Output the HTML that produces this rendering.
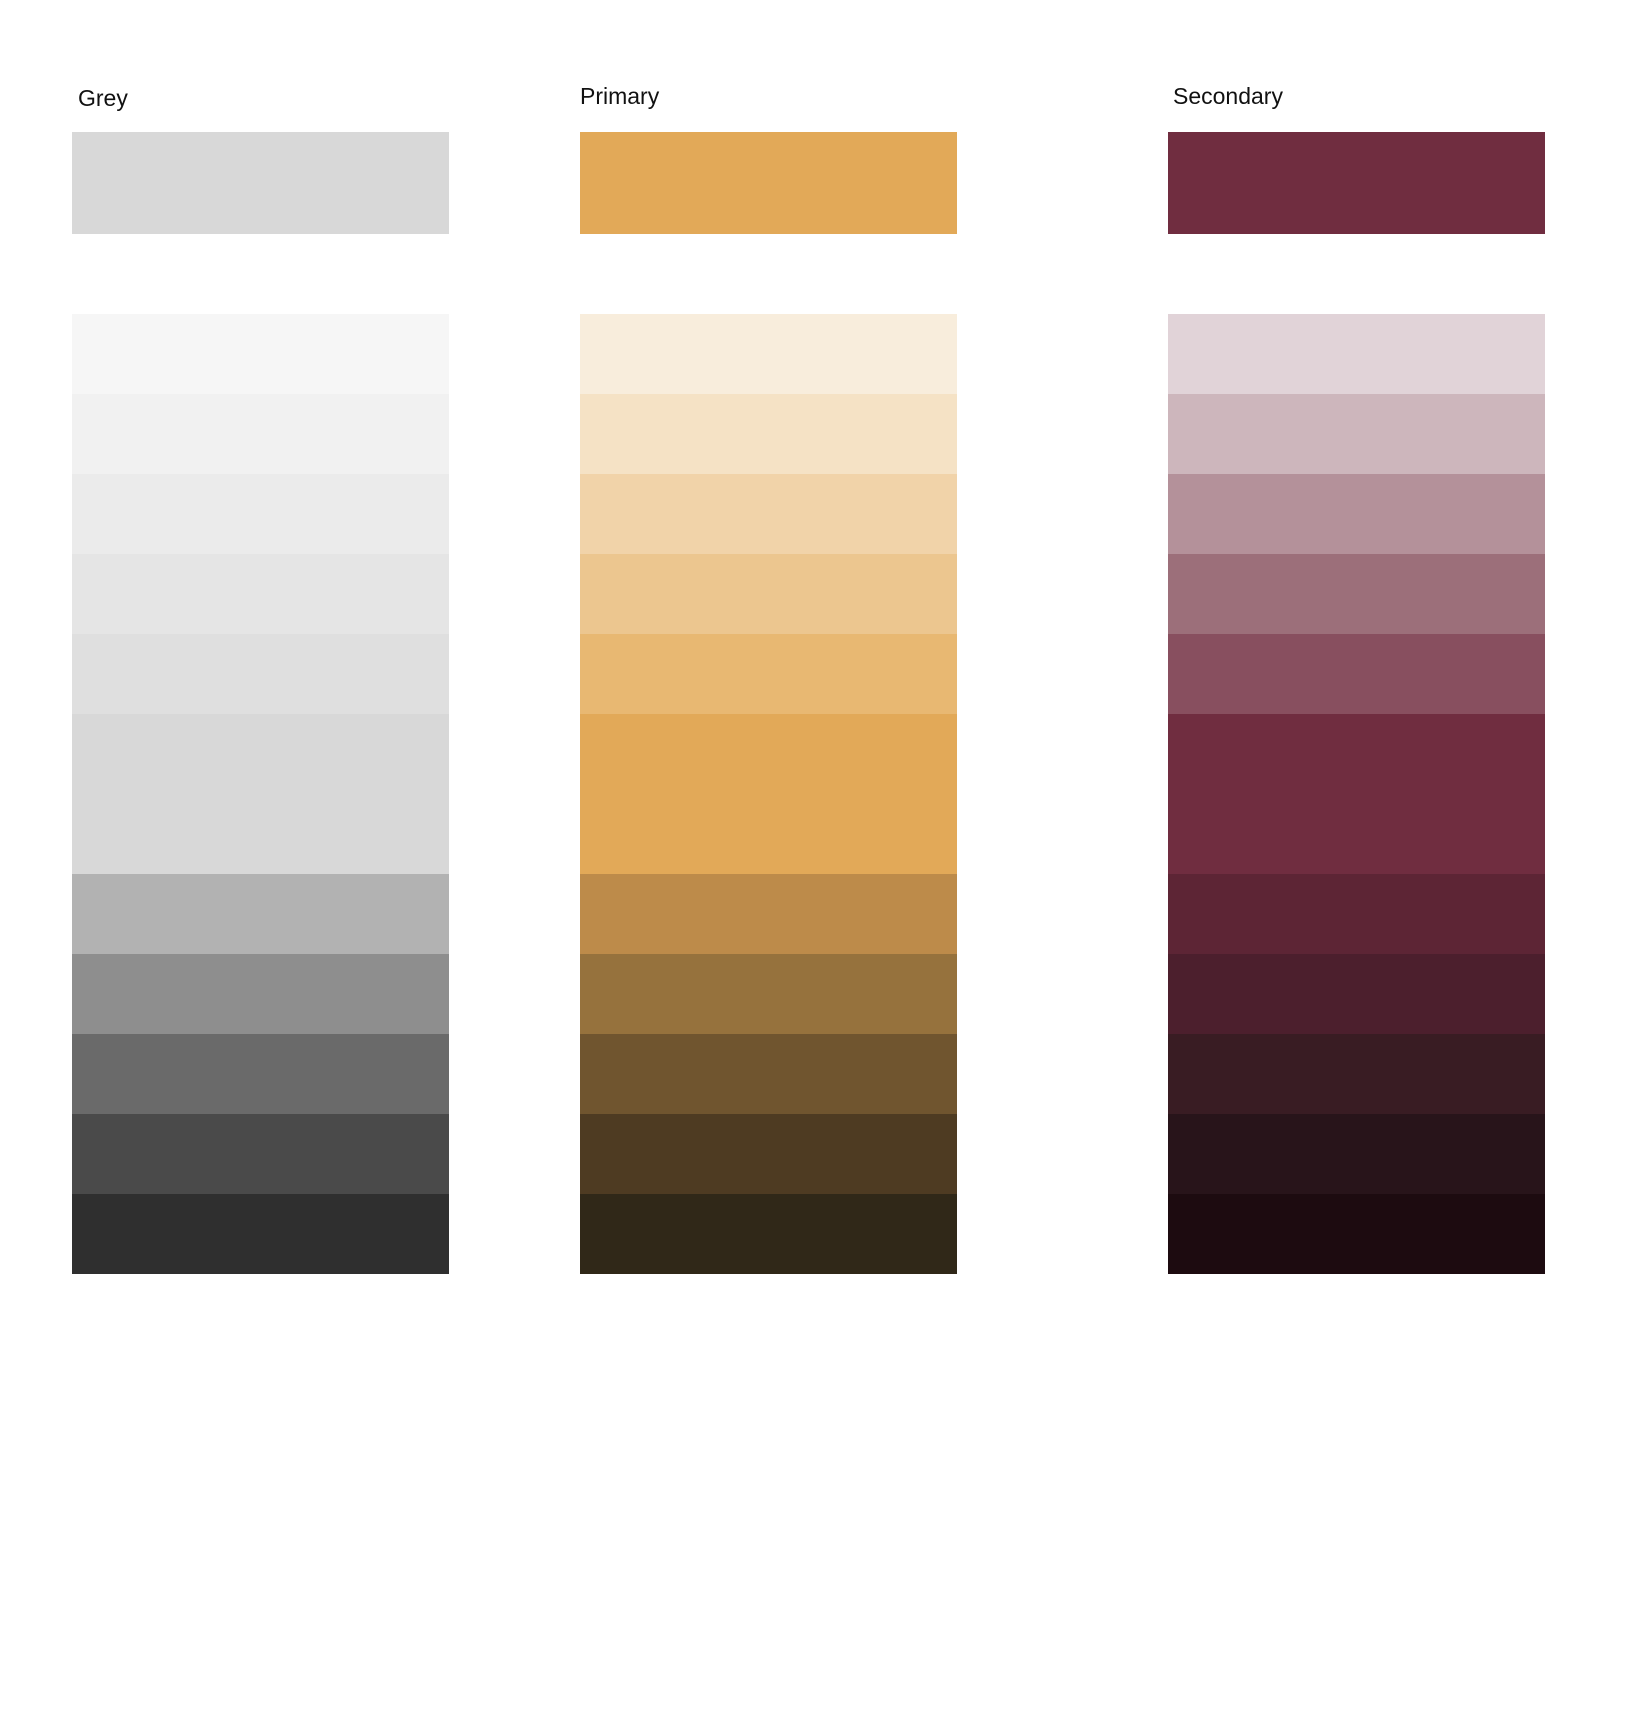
<!DOCTYPE html>
<html><head><meta charset="utf-8"><style>
html,body{margin:0;padding:0;background:#fff;width:1648px;height:1728px;overflow:hidden;font-family:"Liberation Sans",sans-serif;}
.lbl{position:absolute;font-size:23px;color:#111;}
.col{position:absolute;width:377px;}
.col div{height:80px;}
.col div.big{height:160px;}
.top{position:absolute;width:377px;height:102px;top:132px;}
</style></head><body>
<div class="lbl" style="left:78px;top:85px">Grey</div>
<div class="lbl" style="left:580px;top:83px">Primary</div>
<div class="lbl" style="left:1173px;top:83px">Secondary</div>

<div class="top" style="left:72px;background:#d8d8d8"></div>
<div class="top" style="left:580px;background:#e2a958"></div>
<div class="top" style="left:1168px;background:#702d40"></div>

<div class="col" style="left:72px;top:314px">
<div style="background:#f6f6f6"></div><div style="background:#f1f1f1"></div><div style="background:#ebebeb"></div><div style="background:#e5e5e5"></div><div style="background:#dfdfdf"></div><div class="big" style="background:#d8d8d8"></div><div style="background:#b2b2b2"></div><div style="background:#8e8e8e"></div><div style="background:#6a6a6a"></div><div style="background:#4a4a4a"></div><div style="background:#2f2f2f"></div>
</div>
<div class="col" style="left:580px;top:314px">
<div style="background:#f8eddc"></div><div style="background:#f5e2c5"></div><div style="background:#f1d3a9"></div><div style="background:#ecc68f"></div><div style="background:#e8b872"></div><div class="big" style="background:#e2a958"></div><div style="background:#bd8b4a"></div><div style="background:#96723d"></div><div style="background:#70552f"></div><div style="background:#4e3b22"></div><div style="background:#302818"></div>
</div>
<div class="col" style="left:1168px;top:314px">
<div style="background:#e1d3d8"></div><div style="background:#cdb6bc"></div><div style="background:#b4919a"></div><div style="background:#9c6f7a"></div><div style="background:#884f5f"></div><div class="big" style="background:#702d40"></div><div style="background:#5d2535"></div><div style="background:#4c1f2d"></div><div style="background:#391c23"></div><div style="background:#28141a"></div><div style="background:#1d0b10"></div>
</div>
</body></html>
